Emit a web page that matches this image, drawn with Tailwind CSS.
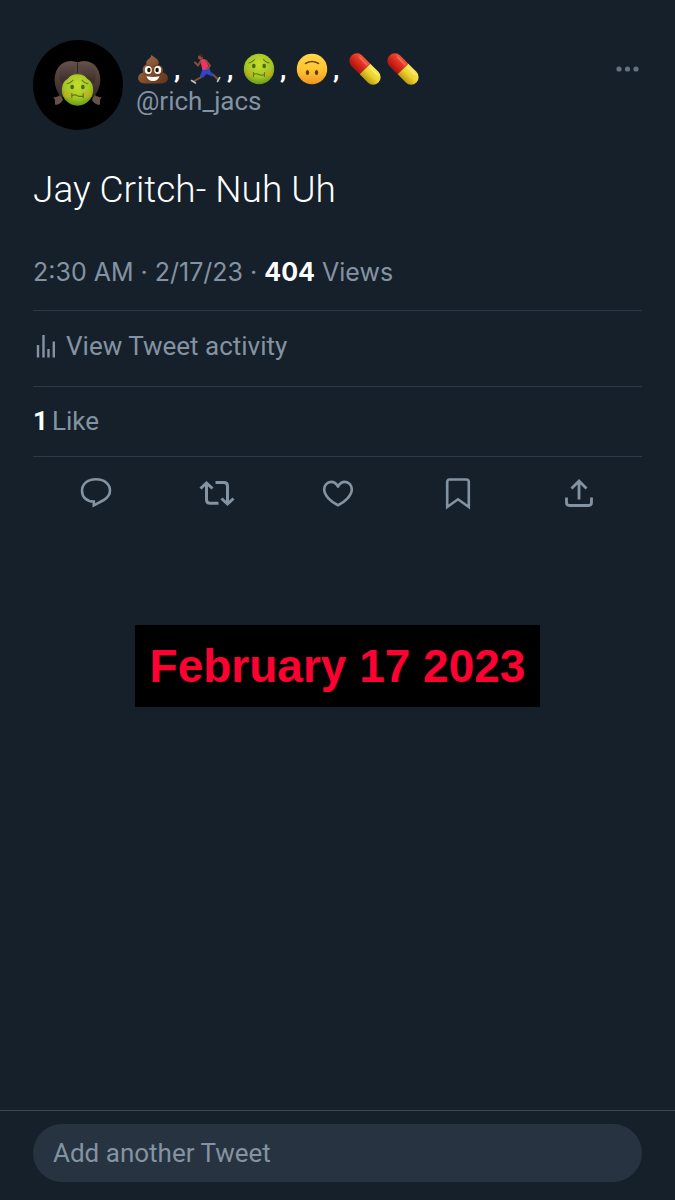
<!DOCTYPE html>
<html lang="en">
<head>
<meta charset="utf-8">
<meta name="viewport" content="width=device-width, initial-scale=1">
<title>Tweet</title>
<script src="https://cdn.jsdelivr.net/npm/@tailwindcss/browser@4"></script>
</head>
<body class="flex min-h-screen flex-col bg-[#16202a] font-['Roboto','Liberation_Sans',sans-serif] text-[26px] leading-8 text-[#8493a2]">
<svg class="absolute size-0" aria-hidden="true">
  <defs>
    <radialGradient id="green" cx=".5" cy=".35" r=".65"><stop offset="0" stop-color="#c6dd30"/><stop offset=".65" stop-color="#a3c622"/><stop offset="1" stop-color="#6b9a18"/></radialGradient>
    <linearGradient id="yellow" x1="0" y1="0" x2="0" y2="1"><stop offset="0" stop-color="#ffd84a"/><stop offset=".6" stop-color="#fdc02f"/><stop offset="1" stop-color="#ee9420"/></linearGradient>
    <linearGradient id="brown" x1="0" y1="0" x2="1" y2="1"><stop offset="0" stop-color="#a9714d"/><stop offset=".5" stop-color="#86502f"/><stop offset="1" stop-color="#5e341d"/></linearGradient>
    <linearGradient id="red" x1="0" y1="1" x2="0" y2="0"><stop offset="0" stop-color="#a51410"/><stop offset=".5" stop-color="#dc2a1c"/><stop offset="1" stop-color="#f4583c"/></linearGradient>
    <linearGradient id="gold" x1="0" y1="1" x2="0" y2="0"><stop offset="0" stop-color="#b99a10"/><stop offset=".5" stop-color="#ecd22e"/><stop offset="1" stop-color="#f8e85c"/></linearGradient>
    <linearGradient id="hair" x1="0" y1="0" x2="0" y2="1"><stop offset="0" stop-color="#65504a"/><stop offset="1" stop-color="#382a27"/></linearGradient>
    <symbol id="sick" viewBox="0 0 32 32">
      <circle cx="16" cy="16" r="15.2" fill="url(#green)"/>
      <ellipse cx="6.500" cy="20.500" rx="4" ry="3" fill="#d7a51f" opacity=".5"/><ellipse cx="25.500" cy="20.500" rx="4" ry="3" fill="#d7a51f" opacity=".5"/>
      <ellipse cx="10.800" cy="13" rx="1.800" ry="2.200" fill="#4a6a10"/><ellipse cx="21.200" cy="13" rx="1.800" ry="2.200" fill="#4a6a10"/>
      <path d="M6 10q3.500-.6 5.500-3.500M26 10q-3.500-.6-5.500-3.500M10.500 19.500v4M21.500 19.500v4M10.500 21.500q2.800-1.500 5.500 0t5.500 0" fill="none" stroke="#5a7a14" stroke-width="1.100" stroke-linecap="round"/>
    </symbol>
    <symbol id="pill" viewBox="0 0 32 32">
      <g transform="rotate(45 16 16)"><path d="M16 8.500H4.500a7.500 7.500 0 0 0 0 15H16z" fill="url(#red)"/><path d="M16 8.500h11.500a7.500 7.500 0 0 1 0 15H16z" fill="url(#gold)"/><path d="M4 11.500h10" stroke="#ff9d87" stroke-width="1.400" stroke-linecap="round" opacity=".5"/><path d="M18 11.500h10" stroke="#fff7a8" stroke-width="1.400" stroke-linecap="round" opacity=".5"/></g>
    </symbol>
  </defs>
</svg>

<main class="flex flex-1 flex-col px-[33px] pt-10">
  <header class="flex items-start">
    <svg class="size-[90px] shrink-0" viewBox="0 0 90 90" role="img" aria-label="Profile picture">
      <circle cx="45" cy="45" r="45" fill="#000"/>
      <path d="M28 54q-3 4-7.500 3 0 1.500 1.500 2.500-.5 3.500.5 5.500 5-.5 7.500-5zM61 54q3 4 7.500 3 0 1.500-1.500 2.500.5 3.500-.5 5.500-5-.5-7.500-5z" fill="#665049"/>
      <path d="M28 57C16 42 22 21 38 21q4 0 6.500 1.500Q47 21 51 21c16 0 22 21 10 36z" fill="url(#hair)"/>
      <use href="#sick" x="28" y="33.500" width="33" height="33"/>
      <path d="M44.500 22.500Q42 35.500 28 43.500 23 30 32 24.500q6-3.500 12.500-2zM44.500 22.500Q47 35.500 61 43.500 66 30 57 24.500q-6-3.500-12.500-2z" fill="url(#hair)"/>
      <path d="M44.500 23v10" stroke="#30231f" stroke-width="1"/>
    </svg>
    <div class="ml-[13px] flex-1 pt-[13px]">
      <h1 class="flex h-8 items-center font-bold text-white">
        <svg class="ml-[1px] size-8 shrink-0" viewBox="0 0 32 32" role="img" aria-label="Pile of poo">
          <path d="M14.500 1.500c1 2.500 7.500 4 7.200 8.300-.1 1.300-.7 2.200-.7 2.200 4 .2 6.200 4 4.600 7.600 5.400.8 6.900 6.200 3.500 9.400C27 31 22 30.500 16 30.500S5 31 2.900 29C-.5 25.800 1 20.400 6.200 19.500c-1.500-3.600.1-6.800 3.300-7.900-1.600-5.300 4.500-5 5-10.100z" fill="url(#brown)"/>
          <path d="M10 12.500q6 2 11-.5M6.500 20.500q3 2 6 1.500M25.500 20.500q-3 2-6 1.500" fill="none" stroke="#56301a" stroke-width=".8" opacity=".7"/>
          <ellipse cx="11.300" cy="17" rx="3.500" ry="4" fill="#fff"/><ellipse cx="20.700" cy="17" rx="3.500" ry="4" fill="#fff"/>
          <ellipse cx="11.900" cy="17" rx="1.700" ry="2.200" fill="#21110a"/><ellipse cx="20.100" cy="17" rx="1.700" ry="2.200" fill="#21110a"/>
          <path d="M9.500 23.200q6.500 1.600 13 0-1.300 4.800-6.500 4.800t-6.500-4.800z" fill="#fff"/>
        </svg>
        <span class="w-[21px] pl-[5px]">,</span>
        <svg class="size-8 shrink-0" viewBox="0 0 32 32" role="img" aria-label="Woman running">
          <path d="M14.500 19l-4 5.500-7 4" fill="none" stroke="#8a4f32" stroke-width="2"/>
          <path d="M20 20l4 2.500 4 4" fill="none" stroke="#8a4f32" stroke-width="2"/>
          <path d="M12.500 16l7-.5 1.500 4 3 1.500-1.500 2.500-6-2.500-4 4-2.500-2z" fill="#2b46c8"/>
          <path d="M10 7q3.500-2 6 0l3.500 9-7 1z" fill="#ec3668"/>
          <path d="M10.500 8.500L8 12.500 5 9.500M16 7.500l4 5-2.500 3" fill="none" stroke="#8a4f32" stroke-width="2" stroke-linecap="round" stroke-linejoin="round"/>
          <circle cx="10.500" cy="4.200" r="2.500" fill="#8a4f32"/><path d="M8.500 2.500q1.500-2.500 4-1.200l.8 2-1.300 1.500-1.500-1.500z" fill="#40251d"/>
          <path d="M1.500 27.500l4 2.500M29.700 24.500l-2.200 4" stroke="#bac4cd" stroke-width="1.600" stroke-linecap="round"/>
        </svg>
        <span class="w-[21px] pl-[5px]">,</span>
        <svg class="size-8 shrink-0" role="img" aria-label="Nauseated face"><use href="#sick" width="32" height="32"/></svg>
        <span class="w-[21px] pl-[5px]">,</span>
        <svg class="size-8 shrink-0" viewBox="0 0 32 32" role="img" aria-label="Upside-down face">
          <circle cx="16" cy="16" r="15.200" fill="url(#yellow)"/>
          <path d="M9.500 10.500q6.500-4 13 0" fill="none" stroke="#80450f" stroke-width="1.500" stroke-linecap="round"/>
          <ellipse cx="11.500" cy="19.500" rx="1.700" ry="2.500" fill="#65360d"/><ellipse cx="20.500" cy="19.500" rx="1.700" ry="2.500" fill="#65360d"/>
        </svg>
        <span class="w-[21px] pl-[5px]">,</span>
        <svg class="size-8 shrink-0" role="img" aria-label="Pill"><use href="#pill" width="32" height="32"/></svg>
        <svg class="ml-[6px] size-8 shrink-0" role="img" aria-label="Pill"><use href="#pill" width="32" height="32"/></svg>
      </h1>
      <p><a href="#">@rich_jacs</a></p>
    </div>
    <button type="button" aria-label="More" class="mt-[17px] flex h-6 items-center">
      <svg width="29" height="8" viewBox="0 0 29 8" fill="#637281"><circle cx="6" cy="4" r="2.600"/><circle cx="14.500" cy="4" r="2.600"/><circle cx="23" cy="4" r="2.600"/></svg>
    </button>
  </header>

  <p class="mt-[38px] text-[37px] leading-[44px] font-light text-white">Jay Critch- Nuh Uh</p>
  <p class="mt-[44px] border-b border-[#2d3946] pb-[22px] font-['Inter','Liberation_Sans',sans-serif] text-[25px]">2:30 AM · 2/17/23 · <b class="text-white">404</b> Views</p>
  <a href="#" class="flex h-[76px] items-center border-b border-[#2d3946] pb-[6px]">
    <svg class="mr-[6px]" width="27" height="28" viewBox="0 0 27 28" fill="none" stroke="#8493a2" stroke-width="2.400"><path d="M5 13v12.500M10.500 3v22.500M15.500 17v8.500M20.800 9.500v16"/></svg>
    View Tweet activity
  </a>
  <p class="flex h-[70px] items-center gap-1 border-b border-[#2d3946] pb-[2px]"><b class="text-white">1</b> Like</p>

  <div class="flex justify-between px-[45px] pt-[18px]">
    <button type="button" aria-label="Reply"><svg class="size-9" viewBox="0 0 36 36" fill="none" stroke="#8493a2" stroke-width="2.600"><path d="M15.800 26.500C8.500 26.500 4 22 4 15.700S9 4.300 18 4.300s14 5.300 14 11.300c0 4.300-2.300 7.200-6.200 9.400L15.800 30.300z"/></svg></button>
    <button type="button" aria-label="Retweet"><svg class="size-9" viewBox="0 0 36 36" fill="none" stroke="#8493a2" stroke-width="3"><path d="M1.500 13.500L7.500 8l6 5.500M7.500 8.500v16.200q0 3.600 3.600 3.600h8.400M34.500 23.500l-6 5.500-6-5.500M28.500 28.500V11.200q0-3.600-3.600-3.600H16.500"/></svg></button>
    <button type="button" aria-label="Like"><svg class="size-9" viewBox="0 0 36 36" fill="none" stroke="#8493a2" stroke-width="2.600" stroke-linejoin="round"><path d="M18 30.300C11 27 4.200 20.500 4.200 14.300c0-4.200 3-7.400 6.900-7.400 3.200 0 5.400 1.900 6.900 4.700 1.500-2.800 3.700-4.700 6.900-4.700 3.900 0 6.900 3.200 6.900 7.400C31.800 20.500 25 27 18 30.300z"/></svg></button>
    <button type="button" aria-label="Bookmark"><svg class="size-9" viewBox="0 0 36 36" fill="none" stroke="#8493a2" stroke-width="2.600"><path d="M7.200 32V7q0-2.500 2.500-2.500h16.600q2.500 0 2.500 2.500v25L18 24.300z"/></svg></button>
    <button type="button" aria-label="Share"><svg class="size-9" viewBox="0 0 36 36" fill="none" stroke="#8493a2" stroke-width="2.800"><path d="M18 24.500V6M10.500 13.500L18 6l7.500 7.500M5.500 22.500v5q0 3 3 3h19q3 0 3-3v-5"/></svg></button>
  </div>

  <time datetime="2023-02-17" class="mt-[114px] self-center bg-black px-[15px] py-[15px] font-['Liberation_Sans',Arial,sans-serif] text-[46px] leading-[52px] font-bold text-[#fe0132]">February 17 2023</time>
</main>

<footer class="border-t border-[#3a4652] px-[33px] pt-[13px] pb-[18px]">
  <input type="text" aria-label="Add another Tweet" placeholder="Add another Tweet" class="block h-[58px] w-full rounded-full bg-[#273340] px-5 placeholder:text-[#8493a2]">
</footer>
</body>
</html>
